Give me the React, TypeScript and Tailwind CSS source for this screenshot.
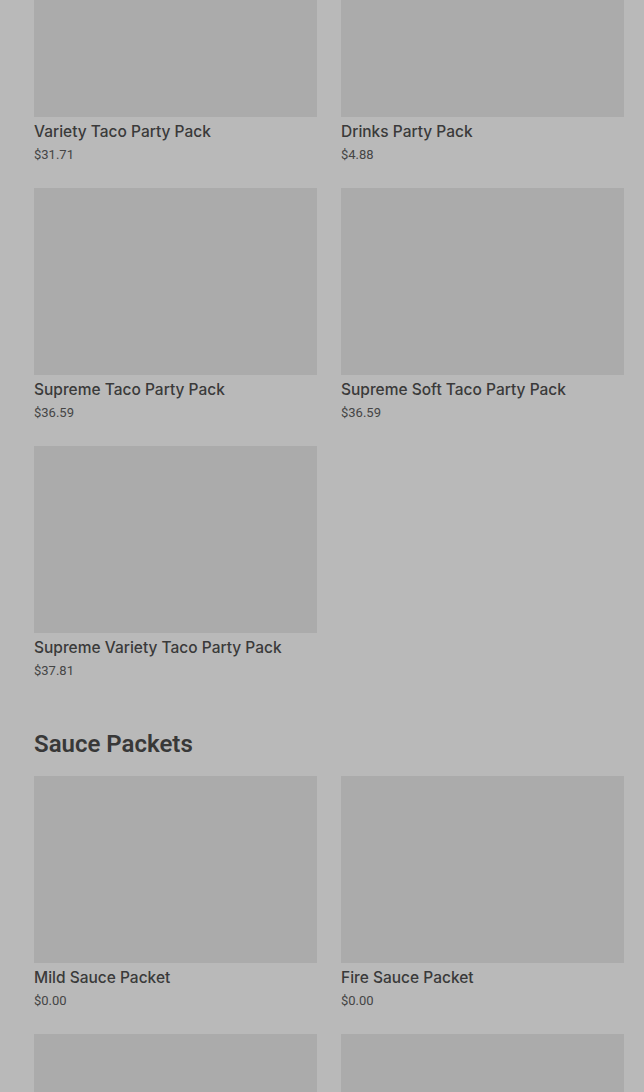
const partyPacks = [
  { name: "Variety Taco Party Pack", price: "$31.71" },
  { name: "Drinks Party Pack", price: "$4.88" },
  { name: "Supreme Taco Party Pack", price: "$36.59" },
  { name: "Supreme Soft Taco Party Pack", price: "$36.59" },
  { name: "Supreme Variety Taco Party Pack", price: "$37.81" },
];

const sauces = [
  { name: "Mild Sauce Packet", price: "$0.00" },
  { name: "Fire Sauce Packet", price: "$0.00" },
  { name: "Hot Sauce Packet", price: "$0.00" },
  { name: "Diablo Sauce Packet", price: "$0.00" },
];

type Item = { name: string; price: string };

const ProductCard = ({ item }: { item: Item }) => (
  <div className="flex flex-col">
    <div className="h-[187px] bg-[#ababab]" />
    <h3 className="mt-[4px] text-[15.5px] leading-[22px] font-medium text-[#3a3a3a] font-['Inter',sans-serif]">
      {item.name}
    </h3>
    <p className="mt-[3px] text-[13px] leading-[18px] text-[#454545]">
      {item.price}
    </p>
  </div>
);

const App = () => {
  return (
    <div
      className="min-h-screen bg-[#b9b9b9] pl-[34px] pr-[20px] overflow-hidden"
      style={{ fontFamily: "Roboto, 'Liberation Sans', sans-serif" }}
    >
      <div className="-mt-[70px] grid grid-cols-2 gap-x-[24px] gap-y-[24px]">
        {partyPacks.map((item) => (
          <ProductCard key={item.name} item={item} />
        ))}
      </div>

      <h2 className="mt-[48px] mb-[16px] text-[24px] leading-[32px] font-semibold text-[#383838]">
        Sauce Packets
      </h2>

      <div className="grid grid-cols-2 gap-x-[24px] gap-y-[24px]">
        {sauces.map((item) => (
          <ProductCard key={item.name} item={item} />
        ))}
      </div>
    </div>
  );
};

export default App;
